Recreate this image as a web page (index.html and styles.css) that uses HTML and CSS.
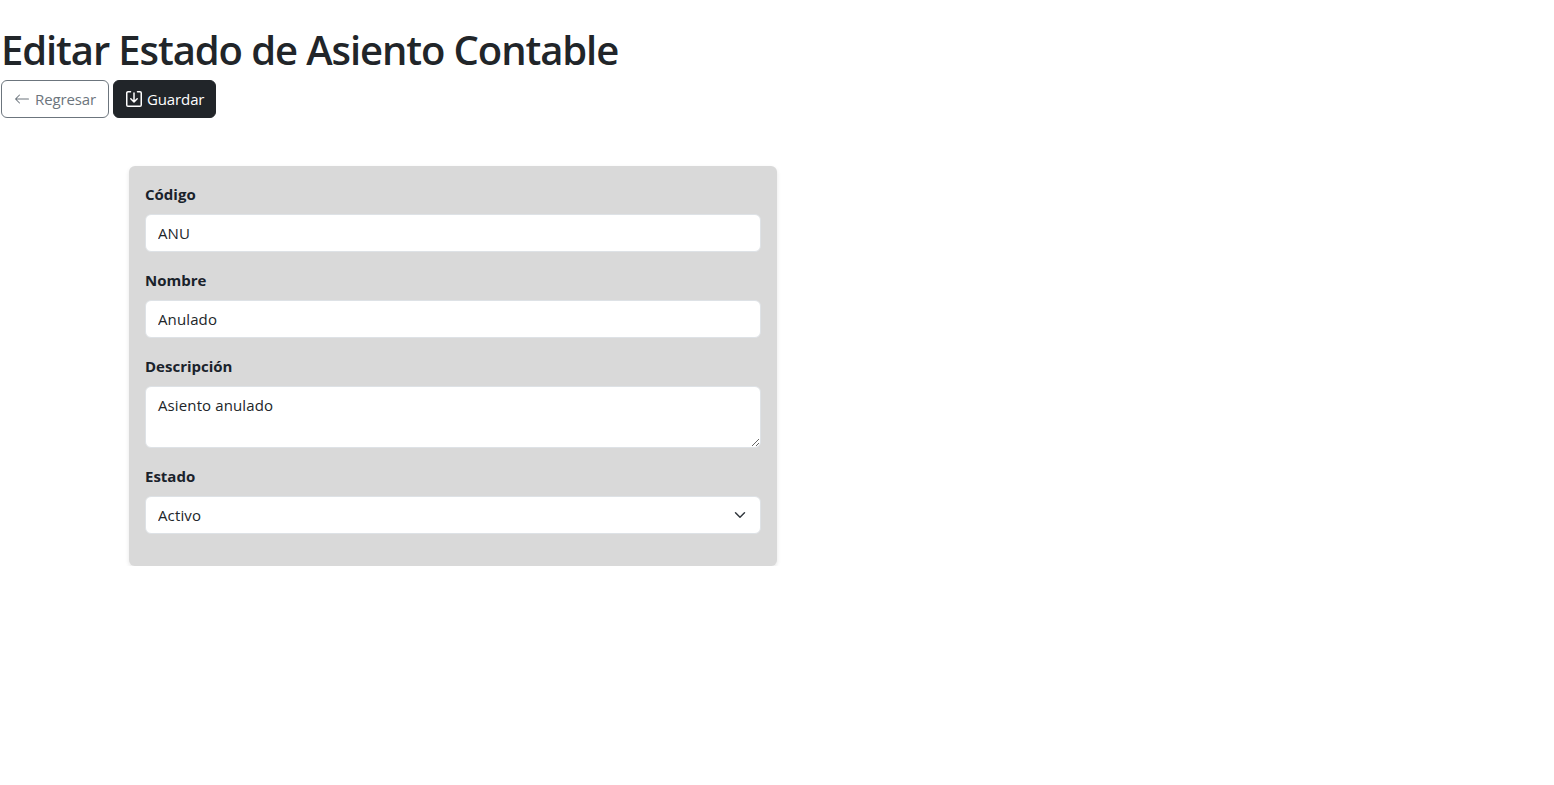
FILE: index.html
```html
<!DOCTYPE html>
<html lang="es">
<head>
    <meta charset="UTF-8">
    <meta name="viewport" content="width=device-width, initial-scale=1.0">
    <title>Editar Estado de Asiento Contable</title>
    <link rel="stylesheet" href="styles.css">
</head>
<body>

    <div class="page-header">
        <h1>Editar Estado de Asiento Contable</h1>
        <div class="actions">
            <a class="btn btn-outline" href="#">
                <svg class="icon" viewBox="0 0 16 16" fill="currentColor"><path fill-rule="evenodd" d="M15 8a.5.5 0 0 0-.5-.5H2.707l3.147-3.146a.5.5 0 1 0-.708-.708l-4 4a.5.5 0 0 0 0 .708l4 4a.5.5 0 0 0 .708-.708L2.707 8.500H14.500A.5.5 0 0 0 15 8z"/></svg>
                Regresar
            </a>
            <button class="btn btn-dark" type="submit">
                <svg class="icon icon-save" viewBox="0 0 16 16" fill="none" stroke="currentColor" stroke-linecap="round" stroke-linejoin="round"><path d="M4.500 .75H2A1.250 1.250 0 0 0 .75 2v12A1.250 1.250 0 0 0 2 15.250h12A1.250 1.250 0 0 0 15.250 14V2A1.250 1.250 0 0 0 14 .75h-2.500"/><path d="M8 2v9M4.800 7.800 8 11l3.200-3.200"/></svg>
                Guardar
            </button>
        </div>
    </div>

    <div class="container">
        <form class="form-card">
            <div class="field">
                <label for="codigo">Código</label>
                <input id="codigo" type="text" value="ANU">
            </div>
            <div class="field">
                <label for="nombre">Nombre</label>
                <input id="nombre" type="text" value="Anulado">
            </div>
            <div class="field">
                <label for="descripcion">Descripción</label>
                <textarea id="descripcion" rows="2">Asiento anulado</textarea>
            </div>
            <div class="field">
                <label for="estado">Estado</label>
                <select id="estado">
                    <option>Activo</option>
                    <option>Inactivo</option>
                </select>
            </div>
        </form>
    </div>

</body>
</html>
```

FILE: styles.css
```css
body {
    font-family: "Open Sans", "Noto Sans", Arial, sans-serif;
    font-size: 16px;
    line-height: 1.5;
    margin: 0;
    padding: 0;
    background-color: #fff;
    color: #212529;
}

.page-header {
    padding: 26px 0 0 1px;
}

h1 {
    font-size: 40px;
    font-weight: 600;
    line-height: 48px;
    margin: 0 0 6px;
    letter-spacing: -1.1px;
    color: #212529;
}

.actions {
    display: flex;
    gap: 4px;
}

.btn {
    display: inline-flex;
    align-items: center;
    gap: 5px;
    box-sizing: border-box;
    height: 38px;
    padding: 0 12px;
    border: 1px solid transparent;
    border-radius: 6px;
    font-family: inherit;
    font-size: 15px;
    letter-spacing: -0.12px;
    text-decoration: none;
    cursor: pointer;
}

.btn-outline {
    width: 108px;
    color: #6c757d;
    background-color: #fff;
    border-color: #6c757d;
}

.btn-dark {
    width: 103px;
    color: #fff;
    background-color: #212529;
    border-color: #212529;
}

.icon {
    width: 16px;
    height: 16px;
    flex-shrink: 0;
}

.icon-save {
    stroke-width: 1.5;
}

.container {
    width: 1296px;
    margin: 48px auto 0;
}

.form-card {
    box-sizing: border-box;
    width: 648px;
    padding: 16px;
    background-color: #d9d9d9;
    border-radius: 6px;
    box-shadow: 0 2px 4px rgba(0, 0, 0, 0.1);
}

.field {
    margin-bottom: 16px;
}

label {
    display: block;
    margin-bottom: 8px;
    font-size: 15px;
    font-weight: 700;
    line-height: 24px;
    color: #1a222b;
}

input,
textarea,
select {
    display: block;
    box-sizing: border-box;
    width: 100%;
    height: 38px;
    padding: 6px 12px;
    border: 1px solid #dee2e6;
    border-radius: 6px;
    background-color: #fff;
    font-family: inherit;
    font-size: 15px;
    letter-spacing: 0.12px;
    line-height: 24px;
    color: #212529;
    outline: none;
}

textarea {
    height: 62px;
    resize: vertical;
}

select {
    appearance: none;
    padding-right: 36px;
    background-image: url("data:image/svg+xml,%3csvg xmlns='http://www.w3.org/2000/svg' viewBox='0 0 16 16'%3e%3cpath fill='none' stroke='%23343a40' stroke-linecap='round' stroke-linejoin='round' stroke-width='2' d='m2 5 6 6 6-6'/%3e%3c/svg%3e");
    background-repeat: no-repeat;
    background-position: right 12px center;
    background-size: 16px 12px;
}
```
